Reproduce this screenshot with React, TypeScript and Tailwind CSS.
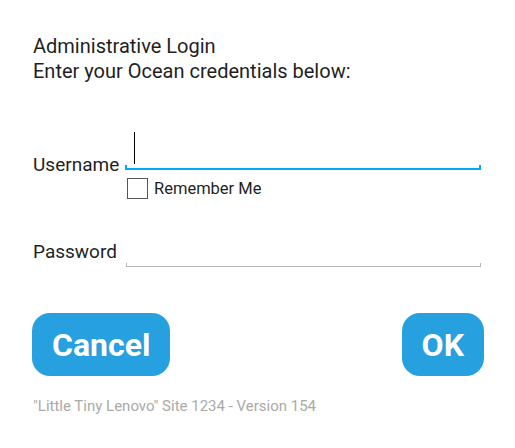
import React from "react";

const font = { fontFamily: "Roboto, 'Noto Sans', sans-serif" };

function Field({ label, focused }: { label: string; focused?: boolean }) {
  return (
    <div className="flex items-end">
      <span
        className={
          "w-[92px] shrink-0 text-[19px] leading-[20px] text-[#1f1f1f] " +
          (focused ? "-mb-[5px]" : "mb-[5px]")
        }
      >
        {label}
      </span>
      <div className="flex w-[356px] flex-col">
        <div className="h-[37px]">
          {focused && <div className="ml-[9px] mt-[4px] h-[32px] w-px bg-black" />}
        </div>
        {focused ? (
          <div className="h-[5px] border-x-2 border-b-2 border-[#03a9f4]" />
        ) : (
          <div className="ml-px h-[4px] border-x border-b border-[#b4b4b4]" />
        )}
      </div>
    </div>
  );
}

export default function App() {
  return (
    <div className="h-[448px] w-[515px] bg-white" style={font}>
      <div className="pl-[33px] pt-[34px]">
        {/* Header */}
        <div className="text-[20px] leading-[25px] text-[#1f1f1f]">
          <div>Administrative Login</div>
          <div>Enter your Ocean credentials below:</div>
        </div>

        {/* Username */}
        <div className="mt-[44px]">
          <Field label="Username" focused />
        </div>

        {/* Remember me */}
        <label className="ml-[94px] mt-[8px] flex items-center gap-[6px]">
          <span className="block h-[21px] w-[21px] border border-[#555]" />
          <span className="text-[16.5px] leading-[21px] text-[#1f1f1f]">Remember Me</span>
        </label>

        {/* Password */}
        <div className="mt-[27px]">
          <Field label="Password" />
        </div>
      </div>

      {/* Buttons */}
      <div className="mt-[46px] flex justify-between pl-[32px] pr-[31px]">
        <button className="h-[63px] rounded-[18px] bg-[#26a0de] px-[20px] text-[32px] font-bold text-white">
          Cancel
        </button>
        <button className="h-[63px] rounded-[18px] bg-[#26a0de] px-[20px] text-[32px] font-bold text-white">
          OK
        </button>
      </div>

      {/* Footer */}
      <div className="mt-[21px] pl-[33px] text-[15px] leading-[18px] text-[#aaaaaa]">
        "Little Tiny Lenovo" Site 1234 - Version 154
      </div>
    </div>
  );
}
